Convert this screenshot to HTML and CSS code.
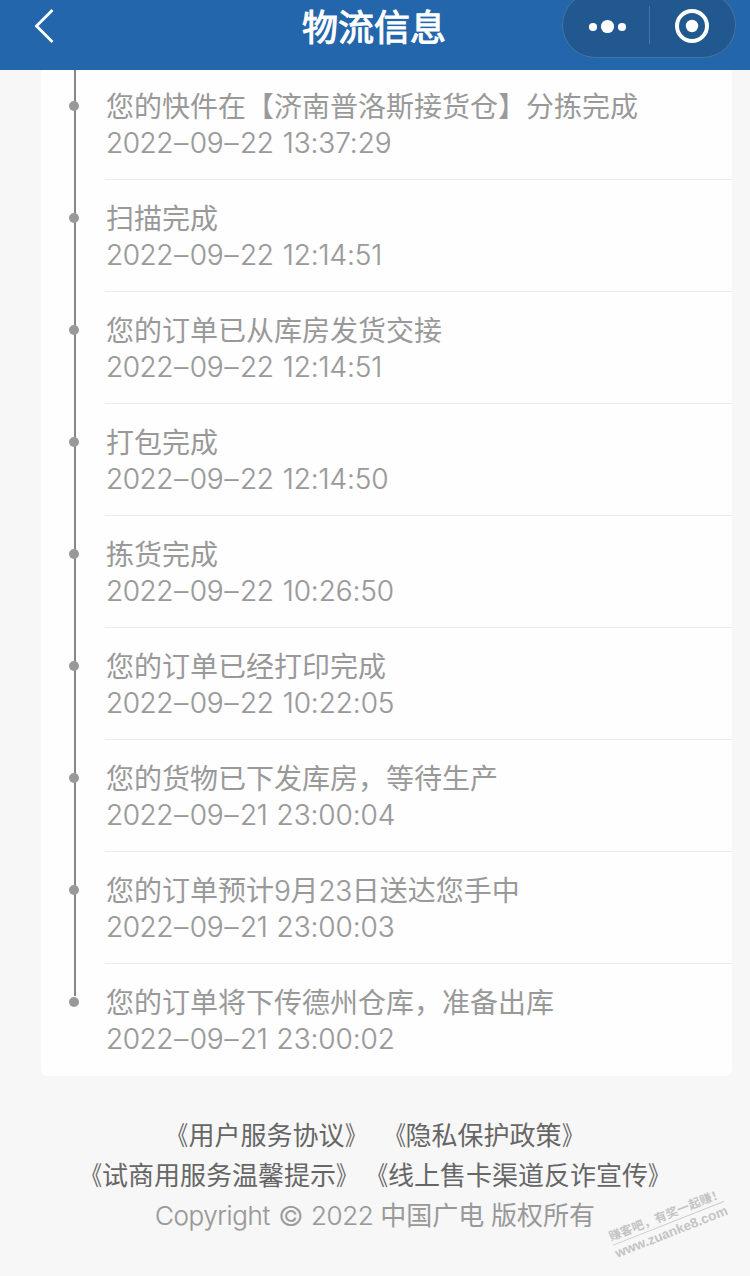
FILE: index.html
```html
<!DOCTYPE html>
<html lang="zh-CN">
<head>
<meta charset="utf-8">
<title>物流信息</title>
<link rel="stylesheet" href="styles.css">
</head>
<body>
<header class="navbar">
  <svg class="back" width="24" height="40" viewBox="0 0 24 40" fill="none" stroke="#fff" stroke-width="2.8"><path d="M20.500 4 4.500 20 20.500 36"/></svg>
  <h1 class="title">物流信息</h1>
  <div class="capsule">
    <svg width="174" height="66" viewBox="0 0 174 66" fill="#fff">
      <circle cx="31" cy="34" r="4.100"/><circle cx="45.500" cy="33.500" r="6.600"/><circle cx="60" cy="34" r="4.100"/>
      <path d="M87.500 13v38" stroke="#4277ab" stroke-width="1"/>
      <circle cx="130" cy="33" r="15" fill="none" stroke="#fff" stroke-width="4"/><circle cx="130" cy="33" r="6.200"/>
    </svg>
  </div>
</header>
<main class="card">
  <div class="item first"><div class="rail"></div><div class="body"><p>您的快件在【济南普洛斯接货仓】分拣完成</p><p class="time">2022<i>–</i>09<i>–</i>22 <span class="clock">13:37:29</span></p></div></div>
  <div class="item"><div class="rail"></div><div class="body"><p>扫描完成</p><p class="time">2022<i>–</i>09<i>–</i>22 <span class="clock">12:14:51</span></p></div></div>
  <div class="item"><div class="rail"></div><div class="body"><p>您的订单已从库房发货交接</p><p class="time">2022<i>–</i>09<i>–</i>22 <span class="clock">12:14:51</span></p></div></div>
  <div class="item"><div class="rail"></div><div class="body"><p>打包完成</p><p class="time">2022<i>–</i>09<i>–</i>22 <span class="clock">12:14:50</span></p></div></div>
  <div class="item"><div class="rail"></div><div class="body"><p>拣货完成</p><p class="time">2022<i>–</i>09<i>–</i>22 <span class="clock">10:26:50</span></p></div></div>
  <div class="item"><div class="rail"></div><div class="body"><p>您的订单已经打印完成</p><p class="time">2022<i>–</i>09<i>–</i>22 <span class="clock">10:22:05</span></p></div></div>
  <div class="item"><div class="rail"></div><div class="body"><p>您的货物已下发库房，等待生产</p><p class="time">2022<i>–</i>09<i>–</i>21 <span class="clock">23:00:04</span></p></div></div>
  <div class="item"><div class="rail"></div><div class="body"><p>您的订单预计<span class="num">9</span>月<span class="num">23</span>日送达您手中</p><p class="time">2022<i>–</i>09<i>–</i>21 <span class="clock">23:00:03</span></p></div></div>
  <div class="item last"><div class="rail"></div><div class="body"><p>您的订单将下传德州仓库，准备出库</p><p class="time">2022<i>–</i>09<i>–</i>21 <span class="clock">23:00:02</span></p></div></div>
</main>
<footer class="footer">
  <p class="links"><span><b class="open">《</b>用户服务协议<b class="close">》</b></span><span><b class="open">《</b>隐私保护政策<b class="close">》</b></span></p>
  <p class="links tight"><span><b class="open">《</b>试商用服务温馨提示<b class="close">》</b></span><span><b class="open">《</b>线上售卡渠道反诈宣传<b class="close">》</b></span></p>
  <p class="copyright"><span class="latin">Copyright <span class="mark">©</span> 2022</span> 中国广电 版权所有</p>
</footer>
<div class="watermark"><div class="slogan">赚客吧，有奖一起赚！</div><div class="site">www.zuanke8.com</div></div>
</body>
</html>
```
FILE: styles.css
```css
* { box-sizing: border-box; }
body {
  margin: 0;
  position: relative;
  width: 750px;
  height: 1276px;
  overflow: hidden;
  background: #f7f7f7;
  font-family: "Noto Sans CJK SC", sans-serif;
  text-spacing-trim: space-all;
}
p, h1 { margin: 0; white-space: nowrap; }
.navbar {
  position: relative;
  height: 70px;
  background: #2366ab;
  display: flex;
  justify-content: center;
}
.back { position: absolute; left: 32px; top: 6px; }
.title {
  padding-right: 2px;
  font-size: 36px;
  line-height: 50px;
  font-weight: 400;
  color: #fff;
  -webkit-text-stroke: 1.1px #fff;
}
.capsule {
  position: absolute;
  left: 562px;
  top: -8px;
  width: 174px;
  height: 66px;
  border-radius: 33px;
  background: #20588f;
  box-shadow: inset 0 0 0 1px #44779f;
}
.capsule svg { display: block; margin-top: 1px; }
.card {
  width: 691px;
  margin-left: 41px;
  background: #fefefe;
  border-radius: 0 0 6px 6px;
}
.item { display: flex; height: 112px; }
.item.first { height: 110px; }
.item.first .body { padding-top: 17px; }
.rail { position: relative; width: 64px; }
.rail::before {
  content: "";
  position: absolute;
  left: 33px;
  top: 0;
  bottom: 0;
  width: 2px;
  background: #868686;
}
.rail::after {
  content: "";
  position: absolute;
  left: 28px;
  top: 33px;
  width: 10px;
  height: 10px;
  border-radius: 50%;
  background: #999;
}
.first .rail::after { top: 31px; }
.last .rail::before { height: 32px; bottom: auto; }
.body {
  flex: 1;
  padding: 19px 0 0 1px;
  border-bottom: 1px solid #ebebeb;
  font-size: 28px;
  line-height: 36px;
  color: #999;
}
.last .body { border-bottom: 0; }
.time, .num, .latin {
  font-family: Inter, "Noto Sans CJK SC", sans-serif;
  font-weight: 300;
  -webkit-text-stroke: 0.2px currentColor;
}
.num { line-height: 1; letter-spacing: -0.4px; }
.time { padding-top: 2px; letter-spacing: -0.5px; word-spacing: 2px; }
.time i { font-style: normal; margin: 0 2px 0 1.5px; }
.clock { letter-spacing: -0.1px; }
.footer {
  padding-top: 38px;
  text-align: center;
  font-size: 26px;
  line-height: 40px;
  color: #666;
}
.links { display: flex; justify-content: center; gap: 9px; }
.links.tight { gap: 0; }
.links b { display: inline-block; width: 26px; font-weight: 400; transform: scaleX(0.8); }
.links .open { transform-origin: right; }
.links .close { transform-origin: left; }
.copyright { color: #999; word-spacing: 1px; }
.latin { letter-spacing: -0.4px; }
.mark { display: inline-block; margin: 0 1px; transform: scale(1.06); }
.watermark {
  position: absolute;
  left: 603px;
  top: 1205px;
  width: 130px;
  transform: rotate(-21.5deg);
  color: #c4c4c4;
  text-align: center;
  white-space: nowrap;
}
.slogan { width: 119px; margin: 0 auto; border-bottom: 1px solid #ccc; font-size: 12px; line-height: 18px; font-weight: 700; letter-spacing: 0.2px; }
.site { font: bold 13.5px/18px "Liberation Sans", sans-serif; }
```
